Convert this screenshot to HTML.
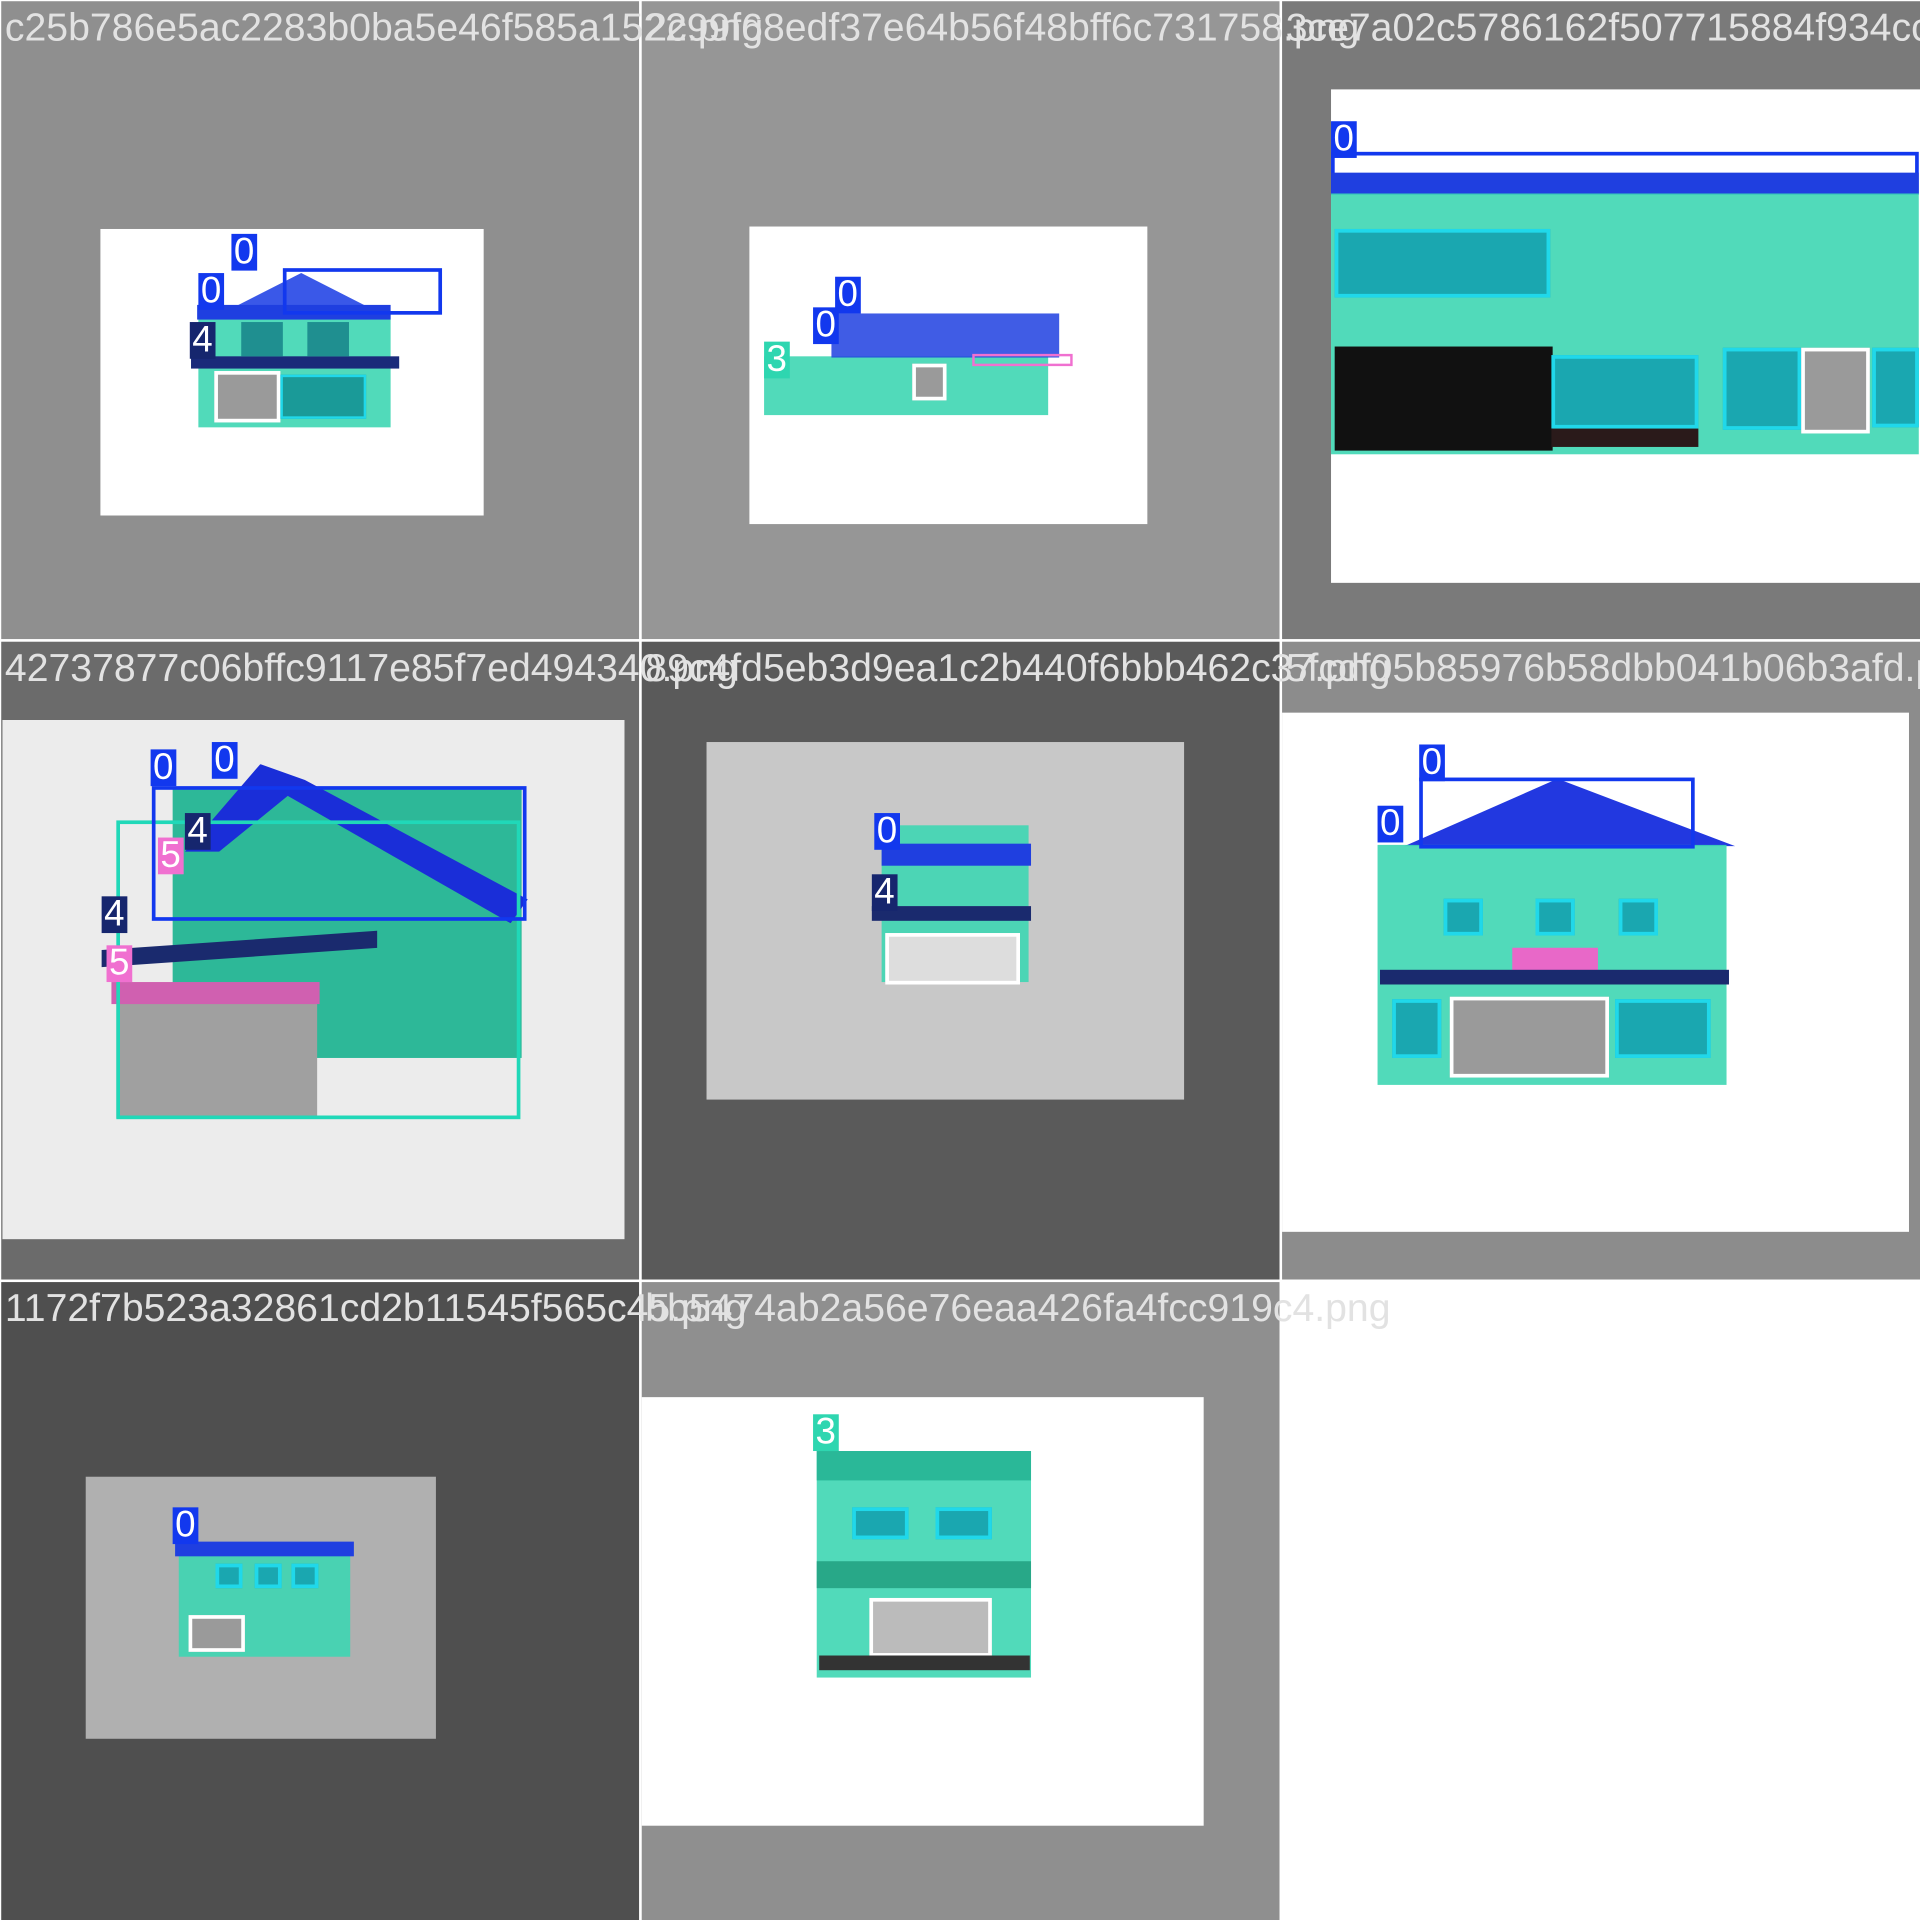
<!DOCTYPE html>
<html><head><style>
html,body{margin:0;padding:0;width:1920px;height:1920px;overflow:hidden;background:#fff}
#w{position:absolute;left:0;top:0;width:1568px;height:1568px;overflow:hidden;transform:scale(1.22449);transform-origin:0 0;font-family:"Liberation Sans",sans-serif}
#w div{position:absolute;box-sizing:border-box}
.t{overflow:hidden}
.tx{color:#e2e2e2;font-size:32px;white-space:nowrap;line-height:1}
.tl{background:#3ed6b2;opacity:.9}
.bl{background:#1f3fe0}
.gr{background:#9a9a9a;border:3px solid #fff}
.bx{border:3px solid #1fe0c0}
.bb{border:3px solid #1238ee}
.cy{border:3px solid #20d8ea;background:#1aa7b0}
.lb{color:#fff;font-size:30px;line-height:1;padding:0 2px}
</style></head><body><div id="w">
<div class="t" style="left:1px;top:1px;width:521px;height:521px;background:#8f8f8f">
<div style="left:81px;top:186px;width:313px;height:234px;background:#fff"></div>
<div style="left:180px;top:222px;width:0;height:0;border-left:65px solid transparent;border-right:65px solid transparent;border-bottom:33px solid #3a58e8"></div>
<div class="tl" style="left:161px;top:254px;width:157px;height:94px"></div>
<div class="bl" style="left:160px;top:248px;width:158px;height:12px"></div>
<div style="left:155px;top:290px;width:170px;height:10px;background:#1a2a7a"></div>
<div class="gr" style="left:174px;top:302px;width:54px;height:42px"></div>
<div style="left:228px;top:305px;width:70px;height:36px;background:#1a9a98;border:2px solid #20d8ea"></div>
<div style="left:196px;top:262px;width:34px;height:28px;background:#1f8f90"></div>
<div style="left:250px;top:262px;width:34px;height:28px;background:#1f8f90"></div>
<div class="bb" style="left:230px;top:218px;width:130px;height:38px"></div>
<div class="lb" style="left:188px;top:190px;background:#1238ee">0</div>
<div class="lb" style="left:161px;top:222px;background:#1238ee">0</div>
<div class="lb" style="left:154px;top:262px;background:#16266e">4</div>
</div>
<div class="t" style="left:524px;top:1px;width:521px;height:521px;background:#969696">
<div style="left:88px;top:184px;width:325px;height:243px;background:#fff"></div>
<div class="tl" style="left:100px;top:290px;width:232px;height:48px"></div>
<div class="bl" style="left:155px;top:255px;width:186px;height:36px;opacity:.85"></div>
<div class="gr" style="left:221px;top:296px;width:28px;height:30px"></div>
<div class="lb" style="left:100px;top:278px;background:#2ed6b0">3</div>
<div class="lb" style="left:158px;top:225px;background:#1238ee">0</div>
<div class="lb" style="left:140px;top:250px;background:#1238ee">0</div>
<div style="left:270px;top:288px;width:82px;height:10px;border:2px solid #f070d0"></div>
</div>
<div class="t" style="left:1047px;top:1px;width:521px;height:521px;background:#7a7a7a">
<div style="left:40px;top:72px;width:481px;height:403px;background:#fff"></div>
<div class="bb" style="left:40px;top:123px;width:480px;height:35px"></div>
<div class="bl" style="left:40px;top:140px;width:480px;height:17px"></div>
<div class="tl" style="left:40px;top:157px;width:480px;height:213px"></div>
<div class="cy" style="left:43px;top:186px;width:176px;height:56px"></div>
<div style="left:43px;top:282px;width:178px;height:85px;background:#111"></div>
<div class="cy" style="left:220px;top:289px;width:120px;height:60px"></div>
<div style="left:220px;top:349px;width:120px;height:15px;background:#2a1a1a"></div>
<div class="cy" style="left:360px;top:283px;width:64px;height:67px"></div>
<div class="gr" style="left:424px;top:283px;width:56px;height:70px"></div>
<div class="cy" style="left:482px;top:283px;width:38px;height:65px"></div>
<div class="lb" style="left:40px;top:98px;background:#1238ee">0</div>
</div>
<div class="t" style="left:1px;top:524px;width:521px;height:521px;background:#6b6b6b">
<div style="left:1px;top:64px;width:508px;height:424px;background:#ececec"></div>
<div style="left:140px;top:120px;width:285px;height:220px;background:#2db898"></div>
<div style="left:150px;top:100px;width:280px;height:130px;background:#1a2ed8;clip-path:polygon(22% 0,35% 10%,100% 85%,95% 100%,30% 20%,10% 55%,0 55%)"></div>
<div style="left:94px;top:295px;width:164px;height:94px;background:#a0a0a0"></div>
<div style="left:90px;top:278px;width:170px;height:18px;background:#d060b0"></div>
<div class="bx" style="left:94px;top:146px;width:330px;height:244px;border-color:#20d8b8"></div>
<div class="bb" style="left:123px;top:118px;width:306px;height:110px"></div>
<div style="left:82px;top:244px;width:225px;height:14px;background:#1a2a6e;transform:skewY(-4deg)"></div>
<div class="lb" style="left:122px;top:88px;background:#1238ee">0</div>
<div class="lb" style="left:172px;top:82px;background:#1238ee">0</div>
<div class="lb" style="left:150px;top:140px;background:#16266e">4</div>
<div class="lb" style="left:82px;top:208px;background:#16266e">4</div>
<div class="lb" style="left:128px;top:160px;background:#f070d0">5</div>
<div class="lb" style="left:86px;top:248px;background:#f070d0">5</div>
</div>
<div class="t" style="left:524px;top:524px;width:521px;height:521px;background:#5a5a5a">
<div style="left:53px;top:82px;width:390px;height:292px;background:#c8c8c8"></div>
<div class="tl" style="left:196px;top:150px;width:120px;height:128px"></div>
<div class="bl" style="left:196px;top:165px;width:122px;height:18px"></div>
<div style="left:188px;top:216px;width:130px;height:12px;background:#1a2a6e"></div>
<div class="gr" style="left:199px;top:238px;width:110px;height:42px;background:#ddd"></div>
<div class="lb" style="left:190px;top:140px;background:#1238ee">0</div>
<div class="lb" style="left:188px;top:190px;background:#16266e">4</div>
</div>
<div class="t" style="left:1047px;top:524px;width:521px;height:521px;background:#8c8c8c">
<div style="left:0;top:58px;width:512px;height:424px;background:#fff"></div>
<div style="left:100px;top:112px;width:0;height:0;border-left:125px solid transparent;border-right:145px solid transparent;border-bottom:55px solid #2238e0"></div>
<div class="tl" style="left:78px;top:166px;width:285px;height:196px"></div>
<div class="cy" style="left:132px;top:210px;width:32px;height:30px"></div>
<div class="cy" style="left:207px;top:210px;width:32px;height:30px"></div>
<div class="cy" style="left:275px;top:210px;width:32px;height:30px"></div>
<div style="left:188px;top:250px;width:70px;height:20px;background:#e868c8"></div>
<div style="left:80px;top:268px;width:285px;height:12px;background:#1a2a6e"></div>
<div class="gr" style="left:137px;top:290px;width:130px;height:66px"></div>
<div class="cy" style="left:272px;top:292px;width:78px;height:48px"></div>
<div class="cy" style="left:90px;top:292px;width:40px;height:48px"></div>
<div class="bb" style="left:112px;top:111px;width:225px;height:58px"></div>
<div class="lb" style="left:112px;top:84px;background:#1238ee">0</div>
<div class="lb" style="left:78px;top:134px;background:#1238ee">0</div>
</div>
<div class="t" style="left:1px;top:1047px;width:521px;height:521px;background:#4f4f4f">
<div style="left:69px;top:159px;width:286px;height:214px;background:#b0b0b0"></div>
<div class="tl" style="left:145px;top:214px;width:140px;height:92px"></div>
<div class="bl" style="left:142px;top:212px;width:146px;height:12px"></div>
<div class="gr" style="left:153px;top:272px;width:46px;height:30px"></div>
<div class="cy" style="left:175px;top:230px;width:22px;height:20px"></div>
<div class="cy" style="left:207px;top:230px;width:22px;height:20px"></div>
<div class="cy" style="left:237px;top:230px;width:22px;height:20px"></div>
<div class="lb" style="left:140px;top:184px;background:#1238ee">0</div>
</div>
<div class="t" style="left:524px;top:1047px;width:521px;height:521px;background:#8f8f8f">
<div style="left:0;top:94px;width:459px;height:350px;background:#fff"></div>
<div class="tl" style="left:143px;top:138px;width:175px;height:185px"></div>
<div style="left:143px;top:138px;width:175px;height:24px;background:#2ab898"></div>
<div class="cy" style="left:172px;top:184px;width:46px;height:26px"></div>
<div class="cy" style="left:240px;top:184px;width:46px;height:26px"></div>
<div style="left:143px;top:228px;width:175px;height:22px;background:#28a888"></div>
<div class="gr" style="left:186px;top:258px;width:100px;height:48px;background:#bbb"></div>
<div style="left:145px;top:305px;width:172px;height:12px;background:#333"></div>
<div class="lb" style="left:140px;top:108px;background:#2ed6b0">3</div>
</div>
<div style="left:522px;top:0;width:2px;height:1568px;background:#fff"></div>
<div style="left:1045px;top:0;width:2px;height:1568px;background:#fff"></div>
<div style="left:0;top:522px;width:1568px;height:2px;background:#fff"></div>
<div style="left:0;top:1045px;width:1568px;height:2px;background:#fff"></div>
<div class="tx" style="left:4px;top:6px">c25b786e5ac2283b0ba5e46f585a1522.png</div>
<div class="tx" style="left:527px;top:6px">2c99f68edf37e64b56f48bff6c731758.png</div>
<div class="tx" style="left:1050px;top:6px">3ce7a02c5786162f507715884f934cc0.png</div>
<div class="tx" style="left:4px;top:529px">42737877c06bffc9117e85f7ed494340.png</div>
<div class="tx" style="left:527px;top:529px">89c4fd5eb3d9ea1c2b440f6bbb462c37.png</div>
<div class="tx" style="left:1050px;top:529px">5fcdf05b85976b58dbb041b06b3afd.png</div>
<div class="tx" style="left:4px;top:1052px">1172f7b523a32861cd2b11545f565c45.png</div>
<div class="tx" style="left:527px;top:1052px">bb5474ab2a56e76eaa426fa4fcc919c4.png</div>
</div></body></html>
